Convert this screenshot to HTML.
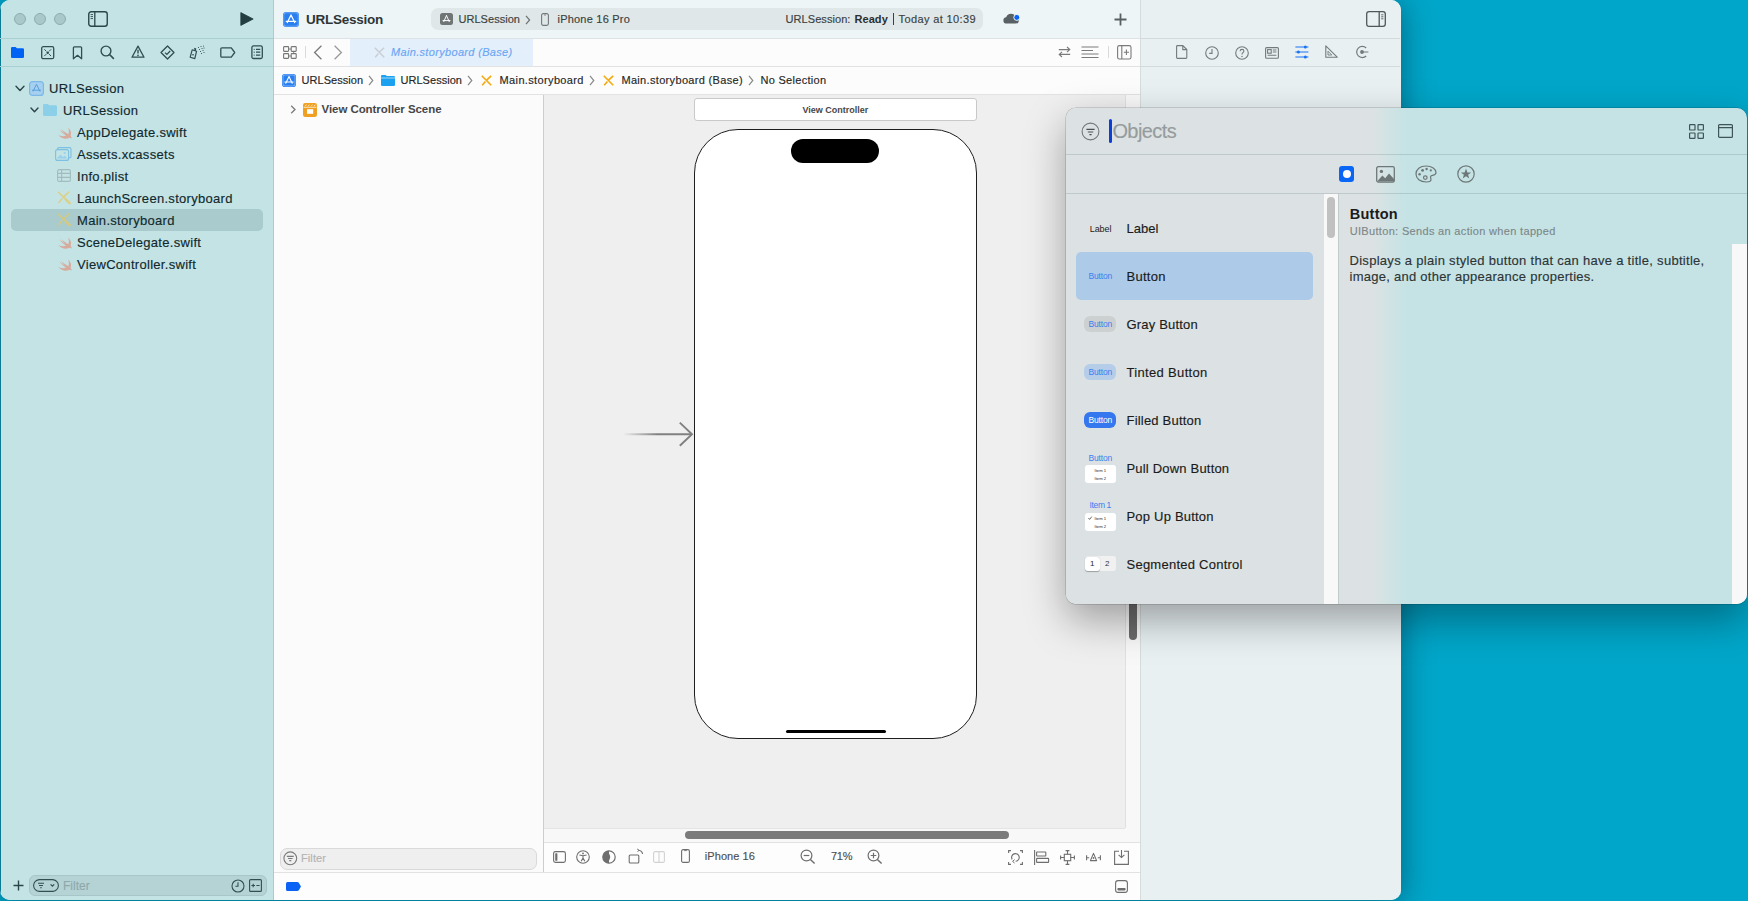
<!DOCTYPE html>
<html><head><meta charset="utf-8">
<style>
*{box-sizing:border-box;margin:0;padding:0}
html,body{width:1748px;height:901px;overflow:hidden}
body{background:#00a6c9;font-family:"Liberation Sans",sans-serif;position:relative;color:#1c1c1c}
.a{position:absolute}
.t{position:absolute;white-space:nowrap;line-height:1;-webkit-text-stroke:0.15px currentColor}
svg{position:absolute;overflow:visible}
</style></head><body>
<!-- desktop shading -->
<div class="a" style="left:0;top:0;width:1748px;height:901px;background:#00a6c9"></div>

<!-- WINDOW -->
<div id="win" class="a" style="left:0;top:0;width:1401px;height:900px;border-radius:10px;overflow:hidden;background:#e8f1f2;box-shadow:0 3px 30px rgba(0,35,55,.5)">
  <!-- sidebar -->
  <div class="a" style="left:0;top:0;width:273px;height:900px;background:#c4e3e5"></div>
  <div class="a" style="left:0;top:0;width:1px;height:900px;background:#0a7b93"></div>
  <div class="a" style="left:273px;top:0;width:1px;height:900px;background:#a6cdd0"></div>
  <div class="a" style="left:0;top:38px;width:273px;height:1px;background:#a9cfd1"></div>
  <div class="a" style="left:0;top:66px;width:273px;height:1px;background:#a9cfd1"></div>

  <!-- editor toolbar -->
  <div class="a" style="left:274px;top:0;width:866px;height:38px;background:#edf5f7"></div>
  <div class="a" style="left:274px;top:38px;width:866px;height:1px;background:#dde3e4"></div>
  <!-- tab row -->
  <div class="a" style="left:274px;top:39px;width:866px;height:27px;background:#fcfcfc"></div>
  <div class="a" style="left:350px;top:39px;width:183px;height:27px;background:#e4effc"></div>
  <div class="a" style="left:274px;top:66px;width:866px;height:1px;background:#e2e2e2"></div>
  <!-- jump bar -->
  <div class="a" style="left:274px;top:67px;width:866px;height:27px;background:#fcfcfc"></div>
  <div class="a" style="left:274px;top:94px;width:866px;height:1px;background:#e2e2e2"></div>
  <!-- outline -->
  <div class="a" style="left:274px;top:95px;width:269px;height:777px;background:#fbfbfb"></div>
  <div class="a" style="left:543px;top:95px;width:1px;height:777px;background:#cdcdcd"></div>
  <!-- canvas -->
  <div class="a" style="left:544px;top:95px;width:581px;height:733px;background:#efefef"></div>
  <div class="a" style="left:544px;top:828px;width:596px;height:14px;background:#f8f8f8"></div>
  <div class="a" style="left:544px;top:828px;width:581px;height:1px;background:#e4e4e4"></div>
  <div class="a" style="left:1126px;top:95px;width:14px;height:747px;background:#f8f8f8"></div>
  <div class="a" style="left:1125px;top:95px;width:1px;height:733px;background:#e0e0e0"></div>
  <div class="a" style="left:544px;top:842px;width:596px;height:1px;background:#e2e2e2"></div>
  <!-- bottom canvas toolbar -->
  <div class="a" style="left:544px;top:843px;width:596px;height:29px;background:#fdfdfd"></div>
  <div class="a" style="left:274px;top:872px;width:866px;height:1px;background:#e2e2e2"></div>
  <!-- debug bar -->
  <div class="a" style="left:274px;top:873px;width:866px;height:27px;background:#fdfdfd"></div>

  <!--EDITOR-->
  <!-- toolbar: app icon -->
  <svg style="left:283px;top:12px" width="16" height="15" viewBox="0 0 16 15"><rect x="0" y="0" width="16" height="15" rx="3.2" fill="#2a7ff0"/><rect x="0.8" y="0.8" width="14.4" height="13.4" rx="2.6" fill="none" stroke="#ffffff" stroke-width="0.6" opacity="0.5"/><path d="M8 3 L4.3 10.6 M8 3 L11.7 10.6 M3.2 9.3 H12.8" stroke="#fff" stroke-width="1.2" stroke-linecap="round"/></svg>
  <!-- status pill -->
  <div class="a" style="left:431px;top:8px;width:552px;height:22px;border-radius:7px;background:#dfe7e8"></div>
  <svg style="left:440px;top:13px" width="13" height="12" viewBox="0 0 13 12"><rect x="0" y="0" width="13" height="12" rx="2.5" fill="#6f7475"/><path d="M6.5 2.6 L3.8 8.6 M6.5 2.6 L9.2 8.6 M3 7.6 H10" stroke="#fff" stroke-width="1" stroke-linecap="round"/></svg>
  <svg style="left:525px;top:15px" width="6" height="10" viewBox="0 0 6 10" fill="none" stroke="#6c7172" stroke-width="1.2"><path d="M1 0.8 L4.6 5 L1 9.2"/></svg>
  <svg style="left:541px;top:13px" width="8" height="13" viewBox="0 0 8 13" fill="none" stroke="#73797a" stroke-width="1.1"><rect x="0.6" y="0.6" width="6.8" height="11.8" rx="1.6"/><path d="M3 2 H5" stroke-width="0.8"/></svg>
  <div class="t" style="left:892.5px;top:13px;width:1px;height:12px;background:#3a3f40"></div>
  <!-- cloud -->
  <svg style="left:1003px;top:13px" width="17" height="11" viewBox="0 0 17 11"><path d="M4 10.6 Q0.4 10.6 0.4 7.4 Q0.4 4.6 3.2 4.3 Q4.2 0.8 8 0.8 Q11.6 0.8 12.4 4 Q15.8 4.2 15.8 7.4 Q15.8 10.6 12.6 10.6 Z" fill="#596164"/><circle cx="13.8" cy="4.4" r="3" fill="#0a63f5" stroke="#edf5f7" stroke-width="1"/></svg>
  <!-- plus -->
  <svg style="left:1114px;top:13px" width="13" height="13" viewBox="0 0 13 13" stroke="#596061" stroke-width="1.8"><path d="M6.5 0.5 V12.5 M0.5 6.5 H12.5"/></svg>

  <!-- tab row -->
  <svg style="left:283px;top:46px" width="14" height="13" viewBox="0 0 14 13" fill="none" stroke="#777" stroke-width="1.1"><rect x="0.6" y="0.6" width="5" height="4.8" rx=".6"/><rect x="8.2" y="0.6" width="5" height="4.8" rx=".6"/><rect x="0.6" y="7.6" width="5" height="4.8" rx=".6"/><rect x="8.2" y="7.6" width="5" height="4.8" rx=".6"/><path d="M5.6 3 H8.2 M10.7 5.4 V7.6 M5.6 10 H8.2" stroke-width="0.9"/></svg>
  <div class="a" style="left:305px;top:46px;width:1px;height:12px;background:#dadada"></div>
  <svg style="left:313px;top:45px" width="10" height="15" viewBox="0 0 10 15" fill="none" stroke="#7a7a7a" stroke-width="1.3"><path d="M8.4 0.8 L1.6 7.5 L8.4 14.2"/></svg>
  <svg style="left:333px;top:45px" width="10" height="15" viewBox="0 0 10 15" fill="none" stroke="#9a9a9a" stroke-width="1.3"><path d="M1.6 0.8 L8.4 7.5 L1.6 14.2"/></svg>
  <svg style="left:374px;top:47px" width="11" height="11" viewBox="0 0 11 11" fill="none" stroke="#c9ced4" stroke-width="1.5"><path d="M0.8 0.8 L10.2 10.2 M10.2 0.8 L5.5 5 M4.4 6.4 L1.2 10.2"/></svg>
  <!-- right tab row icons -->
  <svg style="left:1058px;top:46px" width="13" height="12" viewBox="0 0 13 12" fill="none" stroke="#7a7a7a" stroke-width="1.1"><path d="M0.8 3.6 H11.6 M9 1 L11.8 3.6 L9 6.2 M12.2 8.4 H1.4 M4 5.8 L1.2 8.4 L4 11"/></svg>
  <svg style="left:1081px;top:46px" width="18" height="13" viewBox="0 0 18 13" stroke="#7a7a7a" stroke-width="1.1"><path d="M0.5 1 H17.5 M0.5 4.5 H12 M0.5 8 H17.5 M0.5 11.5 H17.5"/></svg>
  <div class="a" style="left:1108px;top:46px;width:1px;height:12px;background:#dadada"></div>
  <svg style="left:1117px;top:45px" width="15" height="15" viewBox="0 0 15 15" fill="none" stroke="#7a7a7a" stroke-width="1.1"><rect x="0.6" y="0.6" width="13.4" height="13.4" rx="1.8"/><path d="M4.8 0.6 V14 M9.4 4.6 V10 M6.8 7.3 H12"/></svg>

  <!-- jump bar -->
  <svg style="left:282px;top:74px" width="14" height="13" viewBox="0 0 14 13"><rect x="0" y="0" width="14" height="13" rx="2.8" fill="#2a7ff0"/><rect x="1" y="1" width="12" height="11" rx="2" fill="none" stroke="#fff" stroke-width="0.7" opacity=".55"/><path d="M7 2.6 L3.8 9.2 M7 2.6 L10.2 9.2 M2.8 8 H11.2" stroke="#fff" stroke-width="1.1" stroke-linecap="round"/></svg>
  <svg style="left:368px;top:75px" width="6" height="11" viewBox="0 0 6 11" fill="none" stroke="#8a8a8a" stroke-width="1.2"><path d="M1 0.8 L4.8 5.5 L1 10.2"/></svg>
  <svg style="left:381px;top:75px" width="14" height="11" viewBox="0 0 14 11"><path d="M0 1.2 Q0 0 1.2 0 H4.6 L5.8 1.1 H12.8 Q14 1.1 14 2.3 V9.8 Q14 11 12.8 11 H1.2 Q0 11 0 9.8 Z" fill="#1ca0f0"/><path d="M0 3 H14" stroke="#fcfcfc" stroke-width="0.6"/></svg>
  <svg style="left:467px;top:75px" width="6" height="11" viewBox="0 0 6 11" fill="none" stroke="#8a8a8a" stroke-width="1.2"><path d="M1 0.8 L4.8 5.5 L1 10.2"/></svg>
  <svg style="left:481px;top:75px" width="11" height="11" viewBox="0 0 11 11" fill="none" stroke="#f4a90c" stroke-width="1.6"><path d="M0.8 0.8 L10.2 10.2 M10.2 0.8 L5.6 5.2 M4.4 6.4 L1.2 10.2"/></svg>
  <svg style="left:589px;top:75px" width="6" height="11" viewBox="0 0 6 11" fill="none" stroke="#8a8a8a" stroke-width="1.2"><path d="M1 0.8 L4.8 5.5 L1 10.2"/></svg>
  <svg style="left:603px;top:75px" width="11" height="11" viewBox="0 0 11 11" fill="none" stroke="#f4a90c" stroke-width="1.6"><path d="M0.8 0.8 L10.2 10.2 M10.2 0.8 L5.6 5.2 M4.4 6.4 L1.2 10.2"/></svg>
  <svg style="left:748px;top:75px" width="6" height="11" viewBox="0 0 6 11" fill="none" stroke="#8a8a8a" stroke-width="1.2"><path d="M1 0.8 L4.8 5.5 L1 10.2"/></svg>

  <!-- outline -->
  <svg style="left:290px;top:105px" width="7" height="9" viewBox="0 0 7 9" fill="none" stroke="#7a7a7a" stroke-width="1.3"><path d="M1.2 0.8 L5 4.5 L1.2 8.2"/></svg>
  <svg style="left:303px;top:103px" width="14" height="14" viewBox="0 0 14 14"><rect x="0" y="0" width="14" height="14" rx="2.2" fill="#f0a020"/><rect x="4" y="6.2" width="6.2" height="4.6" fill="#fff"/><path d="M0.5 4.3 H13.5" stroke="#fff" stroke-width="0.7"/><path d="M2.2 3.2 L3.4 1.6 M5.2 3.2 L6.4 1.6 M8.2 3.2 L9.4 1.6 M11.2 3.2 L12.2 1.8" stroke="#fff" stroke-width="0.8"/></svg>

  <!-- canvas: view controller header -->
  <div class="a" style="left:694px;top:98px;width:283px;height:23px;border-radius:3px;background:#fff;border:1px solid #c9c9c9"></div>
  <!-- phone -->
  <div class="a" style="left:694px;top:129px;width:283px;height:610px;border-radius:44px;background:#fff;border:1px solid #1e1e1e"></div>
  <div class="a" style="left:791px;top:138.5px;width:88px;height:24.5px;border-radius:12.25px;background:#000"></div>
  <div class="a" style="left:785.5px;top:729.8px;width:100px;height:3.6px;border-radius:2px;background:#000"></div>
  <!-- entry arrow -->
  <svg style="left:620px;top:420px" width="76" height="28" viewBox="0 0 76 28"><defs><linearGradient id="ag" gradientUnits="userSpaceOnUse" x1="3" x2="72" y1="0" y2="0"><stop offset="0" stop-color="#808080" stop-opacity="0"/><stop offset="0.5" stop-color="#808080" stop-opacity="1"/></linearGradient></defs><path d="M3 14.2 H71.5" stroke="url(#ag)" stroke-width="1.9"/><path d="M59.8 2.6 L72 14.2 L59.8 25.8" fill="none" stroke="#808080" stroke-width="1.9"/></svg>

  <!-- canvas scrollers -->
  <div class="a" style="left:685px;top:831px;width:324px;height:8px;border-radius:4px;background:#7b7b7b"></div>
  <div class="a" style="left:1129px;top:560px;width:8px;height:80px;border-radius:4px;background:#6b6b6b"></div>

  <!-- outline filter -->
  <div class="a" style="left:279.5px;top:848px;width:257px;height:21.5px;border-radius:7px;background:#efefef;border:1px solid #d9d9d9"></div>
  <svg style="left:283px;top:851px" width="15" height="15" viewBox="0 0 15 15" fill="none" stroke="#7a7a7a" stroke-width="1.1"><circle cx="7.3" cy="7.3" r="6.4"/><path d="M3.9 5.4 H10.7 M5 7.5 H9.6 M6.3 9.6 H8.3"/></svg>

  <!-- canvas bottom toolbar icons -->
  <svg style="left:553px;top:851px" width="13" height="12" viewBox="0 0 13 12"><rect x="0.6" y="0.6" width="11.8" height="10.8" rx="1.8" fill="none" stroke="#6e6e6e" stroke-width="1.1"/><rect x="2.2" y="2.2" width="2.2" height="7.6" rx=".6" fill="#6e6e6e"/></svg>
  <svg style="left:576px;top:850px" width="14" height="14" viewBox="0 0 14 14" fill="none" stroke="#6e6e6e" stroke-width="1.1"><circle cx="7" cy="7" r="6.3"/><circle cx="7" cy="3.4" r="0.9" fill="#6e6e6e" stroke="none"/><path d="M3.4 5 L7 5.8 L10.6 5 M7 5.8 V8 M7 8 L5.2 11.2 M7 8 L8.8 11.2"/></svg>
  <svg style="left:602px;top:850px" width="14" height="14" viewBox="0 0 14 14"><circle cx="7" cy="7" r="6.2" fill="none" stroke="#6e6e6e" stroke-width="1.2"/><path d="M7 0.8 A6.2 6.2 0 0 0 7 13.2 Z" fill="#6e6e6e"/><path d="M7 3.6 Q9.4 7 7 10.4 Q5.6 7 7 3.6Z" fill="#6e6e6e"/></svg>
  <svg style="left:628px;top:848px" width="16" height="16" viewBox="0 0 16 16" fill="none" stroke="#6e6e6e" stroke-width="1.1"><rect x="1.2" y="7" width="9.6" height="8" rx="1"/><path d="M10.6 2.2 Q14 2.6 14.6 6"/><path d="M9.2 1 L11 2.2 L9.6 3.8" stroke-width="1"/></svg>
  <svg style="left:653px;top:851px" width="12" height="12" viewBox="0 0 12 12" fill="none" stroke="#d2d2d2" stroke-width="1.1"><rect x="0.6" y="0.6" width="10.8" height="10.8" rx="1.5"/><path d="M6 0.6 V11.4"/></svg>
  <svg style="left:681px;top:849px" width="9" height="14" viewBox="0 0 9 14" fill="none" stroke="#6e6e6e" stroke-width="1.1"><rect x="0.6" y="0.6" width="7.8" height="12.8" rx="1.5"/><path d="M3.2 1.6 H5.8" stroke-width=".9"/></svg>
  <svg style="left:800px;top:849px" width="16" height="16" viewBox="0 0 16 16" fill="none" stroke="#6e6e6e" stroke-width="1.2"><circle cx="6.5" cy="6.5" r="5.4"/><path d="M10.4 10.4 L14.6 14.6" stroke-width="1.4"/><path d="M3.7 6.5 H9.3"/></svg>
  <svg style="left:867px;top:849px" width="16" height="16" viewBox="0 0 16 16" fill="none" stroke="#6e6e6e" stroke-width="1.2"><circle cx="6.5" cy="6.5" r="5.4"/><path d="M10.4 10.4 L14.6 14.6" stroke-width="1.4"/><path d="M3.7 6.5 H9.3 M6.5 3.7 V9.3"/></svg>
  <svg style="left:1008px;top:850px" width="15" height="15" viewBox="0 0 15 15" fill="none" stroke="#6e6e6e" stroke-width="1.1"><path d="M0.6 3 V0.6 H3 M12 0.6 H14.4 V3 M14.4 12 V14.4 H12 M3 14.4 H0.6 V12"/><path d="M4.2 9.4 A3.8 3.8 0 1 1 7.6 11.2"/><path d="M6.6 9.6 L4.6 11.4 L6.6 13" stroke-width="1"/></svg>
  <svg style="left:1034px;top:850px" width="15" height="15" viewBox="0 0 15 15" fill="none" stroke="#6e6e6e" stroke-width="1.1"><path d="M0.6 0 V15"/><rect x="2.6" y="2" width="9.2" height="4" rx=".5"/><rect x="2.6" y="8.4" width="12" height="4" rx=".5"/></svg>
  <svg style="left:1060px;top:850px" width="15" height="15" viewBox="0 0 15 15" fill="none" stroke="#6e6e6e" stroke-width="1.1"><rect x="4.3" y="4.3" width="6.4" height="6.4"/><path d="M7.5 1 V4.3 M7.5 10.7 V14 M5.6 0.6 H9.4 M5.6 14.4 H9.4 M0.6 7.5 H4.3 M10.7 7.5 H14.4 M0.6 5.6 V9.4 M14.4 5.6 V9.4"/></svg>
  <svg style="left:1086px;top:852px" width="15" height="11" viewBox="0 0 15 11" fill="none" stroke="#6e6e6e" stroke-width="1.1"><path d="M7.5 1.4 L10.6 8.6 H4.4 Z" stroke-linejoin="round"/><circle cx="7.5" cy="6" r=".9" fill="#6e6e6e" stroke="none"/><path d="M0.6 3.2 V8.2 M0.6 5.7 H3.2 M14.4 3.2 V8.2 M14.4 5.7 H11.8"/></svg>
  <svg style="left:1114px;top:850px" width="15" height="15" viewBox="0 0 15 15" fill="none" stroke="#6e6e6e" stroke-width="1.1"><path d="M5 1.2 H0.6 V14.4 H14.4 V1.2 H10"/><path d="M7.5 0 V7.6 M4.6 4.8 L7.5 7.6 L10.4 4.8"/></svg>
  <!-- debug bar -->
  <svg style="left:286px;top:882px" width="15" height="9" viewBox="0 0 15 9"><path d="M1.6 0 H11.2 Q12.2 0 12.8 0.8 L15 4.5 L12.8 8.2 Q12.2 9 11.2 9 H1.6 Q0 9 0 7.4 V1.6 Q0 0 1.6 0 Z" fill="#0a63f5"/></svg>
  <svg style="left:1115px;top:880px" width="13" height="13" viewBox="0 0 13 13"><rect x="0.6" y="0.6" width="11.8" height="11.8" rx="2.4" fill="none" stroke="#6e6e6e" stroke-width="1.1"/><rect x="2.4" y="8" width="8.2" height="2.4" rx=".8" fill="#6e6e6e"/></svg>
  <div class="t" style="left:306px;top:13.07px;font-size:13.5px;font-weight:700;-webkit-text-stroke:0;letter-spacing:-0.253px;color:#2e3536;">URLSession</div>
  <div class="t" style="left:458.5px;top:14.1px;font-size:11px;letter-spacing:0.036px;color:#3a3f40;">URLSession</div>
  <div class="t" style="left:557.5px;top:14.1px;font-size:11px;letter-spacing:0.214px;color:#3a3f40;">iPhone 16 Pro</div>
  <div class="t" style="left:785.5px;top:14.1px;font-size:11px;letter-spacing:0.072px;color:#3a3f40;">URLSession:</div>
  <div class="t" style="left:854.6px;top:14.1px;font-size:11px;font-weight:700;-webkit-text-stroke:0;letter-spacing:0.034px;color:#2a2f30;">Ready</div>
  <div class="t" style="left:898.5px;top:14.1px;font-size:11px;letter-spacing:0.381px;color:#3a3f40;">Today at 10:39</div>
  <div class="t" style="left:391px;top:47.19px;font-size:11px;letter-spacing:0.326px;color:#6aa6f4;font-style:italic;">Main.storyboard (Base)</div>
  <div class="t" style="left:301.6px;top:74.69px;font-size:11px;letter-spacing:0.036px;color:#262626;">URLSession</div>
  <div class="t" style="left:400.5px;top:74.69px;font-size:11px;letter-spacing:0.036px;color:#262626;">URLSession</div>
  <div class="t" style="left:499.6px;top:74.69px;font-size:11px;letter-spacing:0.355px;color:#262626;">Main.storyboard</div>
  <div class="t" style="left:621.4px;top:74.69px;font-size:11px;letter-spacing:0.331px;color:#262626;">Main.storyboard (Base)</div>
  <div class="t" style="left:760.4px;top:74.69px;font-size:11px;letter-spacing:0.302px;color:#262626;">No Selection</div>
  <div class="t" style="left:321.5px;top:104.47px;font-size:11.5px;font-weight:700;-webkit-text-stroke:0;letter-spacing:-0.058px;color:#474747;">View Controller Scene</div>
  <div class="t" style="left:802.4px;top:106.1px;font-size:9px;font-weight:700;-webkit-text-stroke:0;letter-spacing:0.009px;color:#474747;">View Controller</div>
  <div class="t" style="left:301px;top:853.19px;font-size:11px;letter-spacing:0.091px;color:#b3b3b3;">Filter</div>
  <div class="t" style="left:704.8px;top:851.29px;font-size:11px;letter-spacing:0.073px;color:#4f4f4f;">iPhone 16</div>
  <div class="t" style="left:831px;top:851.39px;font-size:11px;letter-spacing:-0.277px;color:#4f4f4f;">71%</div>


  <!-- inspector -->
  <div class="a" style="left:1140px;top:0;width:1px;height:900px;background:#d5dcdd"></div>
  <div class="a" style="left:1141px;top:0;width:260px;height:900px;background:#e8f0f2"></div>
  <div class="a" style="left:1140px;top:38px;width:260px;height:1px;background:#d3dadb"></div>
  <div class="a" style="left:1140px;top:66px;width:260px;height:1px;background:#d3dadb"></div>
  <!--INSPECTOR-->
  <svg style="left:1366px;top:11px" width="20" height="16" viewBox="0 0 20 16" fill="none" stroke="#4f5758" stroke-width="1.3"><rect x="0.7" y="0.7" width="18.6" height="14.6" rx="2.4"/><path d="M13.2 1 V15"/><path d="M15.2 3.8 H17.4 M15.2 5.8 H17.4 M15.2 7.8 H17.4" stroke-width="0.9"/></svg>
  <svg style="left:1176px;top:45px" width="12" height="14" viewBox="0 0 12 14" fill="none" stroke="#727a7b" stroke-width="1.1"><path d="M1.4 0.6 H6.8 L10.8 4.6 V12.6 Q10.8 13.4 10 13.4 H1.4 Q0.6 13.4 0.6 12.6 V1.4 Q0.6 0.6 1.4 0.6 Z M6.8 0.6 V4.6 H10.8"/></svg>
  <svg style="left:1204.5px;top:45.5px" width="14" height="14" viewBox="0 0 14 14" fill="none" stroke="#727a7b" stroke-width="1.1"><circle cx="7" cy="7" r="6.3"/><path d="M7 3 V7.4 H4.2"/></svg>
  <svg style="left:1234.5px;top:45.5px" width="14" height="14" viewBox="0 0 14 14" fill="none" stroke="#727a7b" stroke-width="1.1"><circle cx="7" cy="7" r="6.3"/><path d="M5.1 5.3 Q5.1 3.4 7 3.4 Q8.9 3.4 8.9 5.1 Q8.9 6.2 7.6 6.9 Q7 7.3 7 8.4" stroke-width="1.1"/><circle cx="7" cy="10.4" r=".75" fill="#727a7b" stroke="none"/></svg>
  <svg style="left:1265px;top:47px" width="14" height="12" viewBox="0 0 14 12" fill="none" stroke="#727a7b" stroke-width="1.1"><rect x="0.6" y="0.6" width="12.8" height="10.6" rx="1"/><rect x="2.6" y="2.6" width="3.6" height="3.6"/><path d="M7.8 3 H11.4 M7.8 5 H11.4 M2.6 8.2 H11.4"/></svg>
  <svg style="left:1295px;top:45px" width="14" height="14" viewBox="0 0 14 14" stroke="#1a72f5" fill="#1a72f5"><path d="M0.4 2 H13.4 M0.4 7 H13.4 M0.4 12 H13.4" stroke-width="1.2"/><circle cx="10.3" cy="2" r="1.5" stroke="none"/><circle cx="3.4" cy="7" r="1.5" stroke="none"/><circle cx="10.3" cy="12" r="1.5" stroke="none"/></svg>
  <svg style="left:1325px;top:45px" width="13" height="13" viewBox="0 0 13 13" fill="none" stroke="#727a7b" stroke-width="1.1"><path d="M0.8 0.8 V12.2 H12.2 Z" stroke-linejoin="round"/><path d="M3 6.2 V10 H6.8 Z" stroke-width="0.9"/></svg>
  <svg style="left:1355px;top:45px" width="14" height="14" viewBox="0 0 14 14" fill="none" stroke="#727a7b" stroke-width="1.2"><path d="M11.2 3 A5.6 5.6 0 1 0 11.2 11"/><circle cx="7" cy="7" r="1.9" fill="#727a7b" stroke="none"/><path d="M7 7 H13.4"/></svg>
  <!--SIDEBAR-->
  <!-- traffic lights -->
  <div class="a" style="left:14px;top:13px;width:12px;height:12px;border-radius:50%;background:#a9c8ca;border:1px solid #8fadaf"></div>
  <div class="a" style="left:34px;top:13px;width:12px;height:12px;border-radius:50%;background:#a9c8ca;border:1px solid #8fadaf"></div>
  <div class="a" style="left:54px;top:13px;width:12px;height:12px;border-radius:50%;background:#a9c8ca;border:1px solid #8fadaf"></div>
  <!-- sidebar toggle -->
  <svg style="left:88px;top:11px" width="20" height="16" viewBox="0 0 20 16"><rect x="0.75" y="0.75" width="18.5" height="14.5" rx="2.5" fill="none" stroke="#2b4649" stroke-width="1.4"/><line x1="6.8" y1="1" x2="6.8" y2="15" stroke="#2b4649" stroke-width="1.3"/><path d="M2.6 3.6h2.4M2.6 5.6h2.4M2.6 7.6h2.4" stroke="#2b4649" stroke-width="0.9"/></svg>
  <!-- play -->
  <svg style="left:240px;top:12px" width="14" height="14" viewBox="0 0 14 14"><path d="M0.8 0.6 L13.2 7 L0.8 13.4 Z" fill="#233e41" stroke="#233e41" stroke-width="0.8" stroke-linejoin="round"/></svg>

  <!-- navigator icons -->
  <svg style="left:10px;top:46px" width="15" height="13" viewBox="0 0 15 13"><path d="M1 2.2 Q1 1 2.2 1 H5.6 L7 2.2 H12.8 Q14 2.2 14 3.4 V11 Q14 12 12.8 12 H2.2 Q1 12 1 11 Z" fill="#0062f5"/></svg>
  <svg style="left:41px;top:46px" width="14" height="14" viewBox="0 0 14 14" fill="none" stroke="#2f4f52"><rect x="0.7" y="0.7" width="12" height="12" rx="1.5" stroke-width="1.3"/><path d="M3.3 3.3 L5.3 5.3 M10.1 3.3 L8.1 5.3 M3.3 10.1 L5.3 8.1 M10.1 10.1 L8.1 8.1" stroke-width="1"/><circle cx="6.7" cy="6.7" r="1.3" fill="#2f4f52" stroke="none"/></svg>
  <svg style="left:72px;top:46px" width="11" height="14" viewBox="0 0 11 14" fill="none" stroke="#2f4f52" stroke-width="1.3"><path d="M1.4 12.8 V1.8 Q1.4 0.8 2.4 0.8 H8.6 Q9.6 0.8 9.6 1.8 V12.8 L5.5 9.3 Z" stroke-linejoin="round"/></svg>
  <svg style="left:100px;top:45px" width="15" height="15" viewBox="0 0 15 15" fill="none" stroke="#2f4f52" stroke-width="1.4"><circle cx="6" cy="6" r="4.9"/><path d="M9.5 9.5 L13.4 13.4" stroke-linecap="round" stroke-width="1.6"/></svg>
  <svg style="left:131px;top:45px" width="14" height="14" viewBox="0 0 14 14" fill="none" stroke="#2f4f52" stroke-width="1.3"><path d="M7 1.1 L13 12.2 H1 Z" stroke-linejoin="round"/><path d="M7 4.8 V8.6" stroke-width="1.4"/><circle cx="7" cy="10.4" r="0.8" fill="#2f4f52" stroke="none"/></svg>
  <svg style="left:160px;top:45px" width="15" height="15" viewBox="0 0 15 15" fill="none" stroke="#2f4f52" stroke-width="1.3"><path d="M7.5 1 L14 7.5 L7.5 14 L1 7.5 Z" stroke-linejoin="round"/><path d="M5 7.6 L6.9 9.4 L10.2 6" /></svg>
  <svg style="left:189px;top:45px" width="17" height="15" viewBox="0 0 17 15" fill="none" stroke="#2f4f52" stroke-width="1.2"><path d="M3.2 4.8 L7.6 6.2 L5.8 13.6 L1.2 12.2 Z" stroke-linejoin="round"/><path d="M5.2 3.4 L6.6 3.8 L6.2 5.4 L4.8 5" /><path d="M3.5 9 L4.6 10.4 M4.6 9 L3.5 10.4" stroke-width="0.9"/><g fill="#2f4f52" stroke="none"><circle cx="9.5" cy="2.5" r=".55"/><circle cx="12" cy="1.5" r=".55"/><circle cx="14.5" cy="1" r=".55"/><circle cx="10.5" cy="4.5" r=".55"/><circle cx="13" cy="3.5" r=".55"/><circle cx="15" cy="3" r=".55"/><circle cx="11.5" cy="6.5" r=".55"/><circle cx="14" cy="5.5" r=".55"/><circle cx="12.5" cy="8.5" r=".55"/><circle cx="15" cy="7.5" r=".55"/></g></svg>
  <svg style="left:220px;top:47px" width="16" height="11" viewBox="0 0 16 11" fill="none" stroke="#2f4f52" stroke-width="1.3"><path d="M1.8 0.8 H11.3 L14.7 5.5 L11.3 10.2 H1.8 Q0.8 10.2 0.8 9.2 V1.8 Q0.8 0.8 1.8 0.8 Z" stroke-linejoin="round"/></svg>
  <svg style="left:251px;top:45px" width="12" height="14" viewBox="0 0 12 14" fill="none" stroke="#2f4f52" stroke-width="1.3"><rect x="0.9" y="0.9" width="10.4" height="12.6" rx="1.5"/><path d="M5 4.3 H9.3 M5 7.2 H9.3 M5 10.1 H9.3" stroke-width="1.2"/><g fill="#2f4f52" stroke="none"><circle cx="3.2" cy="4.3" r=".6"/><circle cx="3.2" cy="7.2" r=".6"/><circle cx="3.2" cy="10.1" r=".6"/></g></svg>

  <!-- selection row -->
  <div class="a" style="left:11px;top:209px;width:252px;height:22px;border-radius:5px;background:#a9cbcd"></div>

  <!-- tree -->
  <svg style="left:15px;top:85px" width="10" height="7" viewBox="0 0 10 7" fill="none" stroke="#2b4649" stroke-width="1.4"><path d="M1 1.2 L5 5.5 L9 1.2" stroke-linecap="round" stroke-linejoin="round"/></svg>
  <svg style="left:29px;top:81px" width="15" height="15" viewBox="0 0 15 15"><rect x="0.6" y="0.6" width="13.8" height="13.8" rx="3" fill="#a6d0ef" stroke="#7bb8e8" stroke-width="1.2"/><path d="M7.5 3.2 L4 10.5 M7.5 3.2 L11 10.5 M3 9.2 H12" stroke="#5a9fdc" stroke-width="1"/></svg>
  <div class="t" style="left:49px;top:82px;font-size:13px;letter-spacing:0.3px;color:#10292d">URLSession</div>

  <svg style="left:30px;top:107px" width="9" height="6" viewBox="0 0 9 6" fill="none" stroke="#2b4649" stroke-width="1.4"><path d="M1 1 L4.5 4.8 L8 1" stroke-linecap="round" stroke-linejoin="round"/></svg>
  <svg style="left:43px;top:104px" width="14" height="12" viewBox="0 0 14 12"><path d="M0 1.4 Q0 0 1.4 0 H4.8 L6 1.2 H12.6 Q14 1.2 14 2.6 V10.6 Q14 12 12.6 12 H1.4 Q0 12 0 10.6 Z" fill="#8ccfe8"/></svg>
  <div class="t" style="left:63px;top:104px;font-size:13px;letter-spacing:0.3px;color:#10292d">URLSession</div>

  <!-- swift icons -->
  <svg style="left:57.5px;top:126.5px" width="14" height="12" viewBox="0 0 14 12"><path d="M10 0.4 C13 2.8 13.6 6.2 12.6 8.8 C13.4 9.8 13.7 10.9 13.5 11.7 C12.7 10.7 11.7 10.5 10.9 10.9 C7.9 12.4 3.6 11.8 0.4 8 C2.9 9.5 6.1 9.7 8.1 8.6 C5.5 7 2.9 4.6 1.3 2.5 C3.5 4.3 6.1 6.2 7.5 6.9 C5.7 5.3 4.1 3.3 3.1 1.9 C5.7 4.2 8.3 6.1 10.3 7.3 C11.2 5.1 11.1 2.7 10 0.4 Z" fill="#d9a08f" opacity="0.85"/></svg>
  <div class="t" style="left:77px;top:126px;font-size:13px;letter-spacing:0.3px;color:#10292d">AppDelegate.swift</div>
  <svg style="left:55px;top:147px" width="17" height="14" viewBox="0 0 17 14" fill="none" stroke="#7cc0e2" stroke-width="1.1"><rect x="0.6" y="2.6" width="13" height="10.8" rx="2"/><path d="M2.6 2.6 V2 Q2.6 0.6 4 0.6 H14.6 Q16 0.6 16 2 V9.4 Q16 10.8 14.6 10.8 H13.6" /><path d="M1.5 11.5 L5.5 7.8 L8 10 L9.8 8.8 L12.5 11.5" fill="#9ad0ec" stroke="none"/><circle cx="9.6" cy="6" r="1.1" fill="#9ad0ec" stroke="none"/></svg>
  <div class="t" style="left:77px;top:148px;font-size:13px;letter-spacing:0.3px;color:#10292d">Assets.xcassets</div>
  <svg style="left:57px;top:169px" width="14" height="13" viewBox="0 0 14 13" fill="none" stroke="#a3bbbd" stroke-width="1.1"><rect x="0.6" y="0.6" width="12.8" height="11.8" rx="1.5"/><path d="M0.6 4.4 H13.4 M0.6 8.4 H13.4 M4.6 0.6 V12.4"/></svg>
  <div class="t" style="left:77px;top:170px;font-size:13px;letter-spacing:0.3px;color:#10292d">Info.plist</div>
  <svg style="left:57px;top:191px" width="14" height="13" viewBox="0 0 14 13" fill="none" stroke="#dccf86" stroke-width="1.5" stroke-linecap="round"><path d="M1.5 1.2 L9.6 9.4 M11.8 1 L6.2 6.4 M4.8 7.8 L2 11.6"/><path d="M9 8.6 L12.6 12.2" stroke-width="2.6"/></svg>
  <div class="t" style="left:77px;top:192px;font-size:13px;letter-spacing:0.3px;color:#10292d">LaunchScreen.storyboard</div>
  <svg style="left:57px;top:213px" width="14" height="13" viewBox="0 0 14 13" fill="none" stroke="#d6c97f" stroke-width="1.5" stroke-linecap="round"><path d="M1.5 1.2 L9.6 9.4 M11.8 1 L6.2 6.4 M4.8 7.8 L2 11.6"/><path d="M9 8.6 L12.6 12.2" stroke-width="2.6"/></svg>
  <div class="t" style="left:77px;top:214px;font-size:13px;letter-spacing:0.3px;color:#10292d">Main.storyboard</div>
  <svg style="left:57.5px;top:236.5px" width="14" height="12" viewBox="0 0 14 12"><path d="M10 0.4 C13 2.8 13.6 6.2 12.6 8.8 C13.4 9.8 13.7 10.9 13.5 11.7 C12.7 10.7 11.7 10.5 10.9 10.9 C7.9 12.4 3.6 11.8 0.4 8 C2.9 9.5 6.1 9.7 8.1 8.6 C5.5 7 2.9 4.6 1.3 2.5 C3.5 4.3 6.1 6.2 7.5 6.9 C5.7 5.3 4.1 3.3 3.1 1.9 C5.7 4.2 8.3 6.1 10.3 7.3 C11.2 5.1 11.1 2.7 10 0.4 Z" fill="#d9a08f" opacity="0.85"/></svg>
  <div class="t" style="left:77px;top:236px;font-size:13px;letter-spacing:0.3px;color:#10292d">SceneDelegate.swift</div>
  <svg style="left:57.5px;top:258.5px" width="14" height="12" viewBox="0 0 14 12"><path d="M10 0.4 C13 2.8 13.6 6.2 12.6 8.8 C13.4 9.8 13.7 10.9 13.5 11.7 C12.7 10.7 11.7 10.5 10.9 10.9 C7.9 12.4 3.6 11.8 0.4 8 C2.9 9.5 6.1 9.7 8.1 8.6 C5.5 7 2.9 4.6 1.3 2.5 C3.5 4.3 6.1 6.2 7.5 6.9 C5.7 5.3 4.1 3.3 3.1 1.9 C5.7 4.2 8.3 6.1 10.3 7.3 C11.2 5.1 11.1 2.7 10 0.4 Z" fill="#d9a08f" opacity="0.85"/></svg>
  <div class="t" style="left:77px;top:258px;font-size:13px;letter-spacing:0.3px;color:#10292d">ViewController.swift</div>

  <!-- bottom filter -->
  <svg style="left:13px;top:880px" width="11" height="11" viewBox="0 0 11 11" stroke="#2b4649" stroke-width="1.4"><path d="M5.5 0.5 V10.5 M0.5 5.5 H10.5"/></svg>
  <div class="a" style="left:29px;top:875px;width:238px;height:21px;border-radius:6px;background:#b5d3d5;border:1px solid #a7c6c8"></div>
  <svg style="left:33px;top:879px" width="26" height="13" viewBox="0 0 26 13" fill="none" stroke="#2f4f52" stroke-width="1.1"><rect x="0.6" y="0.6" width="24.8" height="11.8" rx="5.9"/><path d="M5 4.2 H11 M6 6.5 H10 M7.2 8.8 H8.8"/><path d="M17.6 5.4 L19.4 7.2 L21.2 5.4" stroke-width="1.2"/></svg>
  <div class="t" style="left:63px;top:880px;font-size:12px;color:#8fa9ab">Filter</div>
  <svg style="left:231px;top:879px" width="14" height="14" viewBox="0 0 14 14" fill="none" stroke="#2f4f52" stroke-width="1.1"><circle cx="7" cy="7" r="6"/><path d="M7 3.2 V7.2 H4.4"/></svg>
  <svg style="left:249px;top:879px" width="13" height="13" viewBox="0 0 13 13" fill="none" stroke="#2f4f52" stroke-width="1.1"><rect x="0.6" y="0.6" width="11.8" height="11.8" rx="1"/><path d="M2.4 6.5 H6 M4.2 4.7 V8.3 M7.4 6.5 H10.6"/></svg>
</div>
<!--POPUP-->
<div id="pop" class="a" style="left:1066px;top:108px;width:681px;height:496px;border-radius:10px;overflow:hidden;background:linear-gradient(to right,#dce2e3 0,#dce2e3 307px,#c5e3e5 340px,#c5e3e5 100%);box-shadow:0 16px 40px rgba(0,0,0,.34),0 0 0 0.5px rgba(0,0,0,.25)">
  <div class="a" style="left:0;top:46px;width:682px;height:1px;background:rgba(0,40,45,.13)"></div>
  <div class="a" style="left:0;top:85px;width:682px;height:1px;background:rgba(0,40,45,.13)"></div>
  <!-- list scroll track -->
  <div class="a" style="left:258px;top:86px;width:14px;height:410px;background:#f8f8f8"></div>
  <div class="a" style="left:261px;top:89px;width:8px;height:41px;border-radius:4px;background:#c1c1c1"></div>
  <div class="a" style="left:272px;top:86px;width:1px;height:410px;background:rgba(0,40,45,.12)"></div>
  <!-- detail scroll strip -->
  <div class="a" style="left:666px;top:136px;width:15px;height:360px;background:#f8f8f8"></div>
  <!-- selection -->
  <div class="a" style="left:10px;top:144px;width:237px;height:48px;border-radius:5px;background:#adcbe9"></div>
  <!-- thumbnails -->
  <div class="a" style="left:18px;top:208px;width:32px;height:15.6px;border-radius:6px;background:#cdd0d1"></div>
  <div class="a" style="left:18px;top:256px;width:32px;height:16px;border-radius:6px;background:#b6cdea"></div>
  <div class="a" style="left:18px;top:304px;width:32px;height:16px;border-radius:6px;background:#3577ee"></div>
  <div class="a" style="left:18.5px;top:357.3px;width:31px;height:18px;border-radius:3px;background:#fff"></div>
  <div class="a" style="left:18.5px;top:405.1px;width:31px;height:18.2px;border-radius:3px;background:#fff"></div>
  <div class="a" style="left:18.5px;top:448px;width:31px;height:15.2px;border-radius:3px;background:#f1f1f1"></div>
  <div class="a" style="left:19px;top:448.5px;width:14.5px;height:14px;border-radius:3px;background:#fff;box-shadow:0 0.5px 1px rgba(0,0,0,.3)"></div>
  <!-- header icons -->
  <svg style="left:15px;top:14px" width="19" height="19" viewBox="0 0 19 19" fill="none" stroke="#727878" stroke-width="1.1"><circle cx="9.5" cy="9.5" r="8.4"/><path d="M5.4 7.4 H13.6 M6.8 10 H12.2 M8.4 12.6 H10.6" stroke="#4a5050" stroke-width="1.1"/></svg>
  <div class="a" style="left:43px;top:11px;width:3px;height:24px;border-radius:1.5px;background:#0a3fd8"></div>
  <svg style="left:623px;top:16px" width="15" height="15" viewBox="0 0 15 15" fill="none" stroke="#3f5456" stroke-width="1.2"><rect x="0.6" y="0.6" width="5.4" height="5.4" rx=".6"/><rect x="9" y="0.6" width="5.4" height="5.4" rx=".6"/><rect x="0.6" y="9" width="5.4" height="5.4" rx=".6"/><rect x="9" y="9" width="5.4" height="5.4" rx=".6"/></svg>
  <svg style="left:652px;top:16px" width="15" height="14" viewBox="0 0 15 14" fill="none" stroke="#3f5456" stroke-width="1.2"><rect x="0.6" y="0.6" width="13.8" height="12.8" rx="1"/><path d="M0.6 3.6 H14.4"/></svg>
  <!-- tab icons -->
  <div class="a" style="left:273px;top:58px;width:15px;height:16px;border-radius:3px;background:#0a67f5"></div>
  <div class="a" style="left:276.5px;top:62px;width:8px;height:8px;border-radius:50%;background:#fff"></div>
  <svg style="left:310px;top:58px" width="19" height="17" viewBox="0 0 19 17"><rect x="0.7" y="0.7" width="17.6" height="15.4" rx="1.6" fill="none" stroke="#6e7777" stroke-width="1.3"/><circle cx="5.4" cy="5.4" r="1.7" fill="#6e7777"/><path d="M1 15.6 L6.4 9.6 L9.2 12.2 L13 7.6 L18 13 V15.6 Z" fill="#6e7777"/></svg>
  <svg style="left:349px;top:57px" width="22" height="18" viewBox="0 0 22 18" fill="none" stroke="#6e7777" stroke-width="1.2"><path d="M11 1 C17 1 21 4 21 7.6 C21 10.4 18.4 10.2 16.6 10.6 C15 11 15.6 13 16 14.2 C16.4 16 14.8 17 11.4 17 C5 17 1 13.6 1 9 C1 4.4 5 1 11 1 Z"/><circle cx="10.3" cy="12.6" r="1.8"/><g fill="#6e7777" stroke="none"><circle cx="4.6" cy="9.2" r="1.2"/><circle cx="7.6" cy="5.4" r="1.4"/><circle cx="11.6" cy="4" r="1.2"/><circle cx="15.8" cy="5.4" r="1.1"/></g></svg>
  <svg style="left:391px;top:57px" width="18" height="18" viewBox="0 0 18 18"><circle cx="9" cy="9" r="8.2" fill="none" stroke="#6e7777" stroke-width="1.2"/><path d="M9 3.6 L10.4 7.4 L14.2 7.4 L11.1 9.8 L12.3 13.6 L9 11.2 L5.7 13.6 L6.9 9.8 L3.8 7.4 L7.6 7.4 Z" fill="#6e7777"/></svg>
</div>
  <div class="t" style="left:1112.4px;top:120.87px;font-size:20px;letter-spacing:-0.573px;color:#959c9d;">Objects</div>
  <div class="t" style="left:1126.5px;top:222.00px;font-size:13px;letter-spacing:-0.002px;color:#1b1b1b;">Label</div>
  <div class="t" style="left:1126.5px;top:270.00px;font-size:13px;letter-spacing:0.284px;color:#1b1b1b;">Button</div>
  <div class="t" style="left:1126.5px;top:318.00px;font-size:13px;letter-spacing:0.184px;color:#1b1b1b;">Gray Button</div>
  <div class="t" style="left:1126.5px;top:366.00px;font-size:13px;letter-spacing:0.334px;color:#1b1b1b;">Tinted Button</div>
  <div class="t" style="left:1126.5px;top:414.00px;font-size:13px;letter-spacing:0.203px;color:#1b1b1b;">Filled Button</div>
  <div class="t" style="left:1126.5px;top:462.00px;font-size:13px;letter-spacing:0.192px;color:#1b1b1b;">Pull Down Button</div>
  <div class="t" style="left:1126.5px;top:510.00px;font-size:13px;letter-spacing:0.203px;color:#1b1b1b;">Pop Up Button</div>
  <div class="t" style="left:1126.5px;top:558.00px;font-size:13px;letter-spacing:0.246px;color:#1b1b1b;">Segmented Control</div>
  <div class="t" style="left:1349.7px;top:206.63px;font-size:14.5px;font-weight:700;-webkit-text-stroke:0;letter-spacing:0.266px;color:#1b1b1b;">Button</div>
  <div class="t" style="left:1349.7px;top:225.69px;font-size:11px;letter-spacing:0.328px;color:#7d8889;">UIButton: Sends an action when tapped</div>
  <div class="t" style="left:1349.5px;top:253.70px;font-size:13px;letter-spacing:0.290px;color:#2d3536;">Displays a plain styled button that can have a title, subtitle,</div>
  <div class="t" style="left:1349.5px;top:269.50px;font-size:13px;letter-spacing:0.259px;color:#2d3536;">image, and other appearance properties.</div>
  <div class="t" style="left:1089.7px;top:224.58px;font-size:9px;-webkit-text-stroke:0;letter-spacing:-0.066px;color:#1b1b1b;">Label</div>
  <div class="t" style="left:1088.4px;top:272.10px;font-size:8.5px;-webkit-text-stroke:0;letter-spacing:-0.130px;color:#3a7ef0;">Button</div>
  <div class="t" style="left:1088.4px;top:320.10px;font-size:8.5px;-webkit-text-stroke:0;letter-spacing:-0.130px;color:#3a7ef0;">Button</div>
  <div class="t" style="left:1088.4px;top:368.10px;font-size:8.5px;-webkit-text-stroke:0;letter-spacing:-0.130px;color:#3a7ef0;">Button</div>
  <div class="t" style="left:1088.4px;top:416.10px;font-size:8.5px;-webkit-text-stroke:0;letter-spacing:-0.130px;color:#ffffff;">Button</div>
  <div class="t" style="left:1088.4px;top:453.50px;font-size:8.5px;-webkit-text-stroke:0;letter-spacing:-0.130px;color:#3a7ef0;">Button</div>
  <div class="t" style="left:1089.5px;top:501.30px;font-size:8.5px;-webkit-text-stroke:0;letter-spacing:-0.354px;color:#3a7ef0;">Item 1</div>

<svg style="left:1084px;top:465px" width="32" height="20" viewBox="0 0 32 20"><g fill="#2a2a2a" font-family="Liberation Sans" font-size="4.2"><text x="10.5" y="7">Item 1</text><text x="10.5" y="15">Item 2</text></g></svg>
<svg style="left:1084px;top:513px" width="32" height="20" viewBox="0 0 32 20"><g fill="#2a2a2a" font-family="Liberation Sans" font-size="4.2"><text x="10.5" y="7">Item 1</text><text x="10.5" y="15">Item 2</text></g><path d="M4.4 5 L5.6 6.4 L7.8 3.6" fill="none" stroke="#2a2a2a" stroke-width="0.7"/></svg>
<div class="t" style="left:1090px;top:560.2px;font-size:8px;-webkit-text-stroke:0;color:#1b1b1b">1</div>
<div class="t" style="left:1105px;top:560.2px;font-size:8px;-webkit-text-stroke:0;color:#333">2</div>
</body></html>
